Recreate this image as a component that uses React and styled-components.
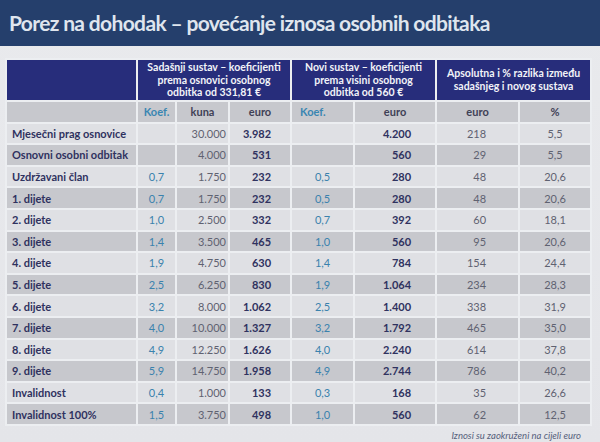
import React from "react";
import styled, { createGlobalStyle } from "styled-components";

const Global = createGlobalStyle`
  html, body { margin: 0; padding: 0; }
  body {
    width: 600px; height: 442px; overflow: hidden;
    background: #e7e8eb;
    font-family: Lato, "Open Sans", "Liberation Sans", sans-serif;
  }
`;

const Page = styled.div`
  width: 600px;
  height: 442px;
  display: flex;
  flex-direction: column;
  background: linear-gradient(180deg, #e9eaed 0%, #e4e5e9 100%);
`;

const TitleBar = styled.header`
  height: 46px;
  background: #253f6c;
  display: flex;
  align-items: center;
  padding: 0 0 2px 9px;
  box-sizing: border-box;
`;

const Title = styled.h1`
  margin: 0;
  font-family: Lato, "Open Sans", sans-serif;
  font-weight: 700;
  font-size: 21px;
  color: #dfe5ee;
  letter-spacing: -0.65px;
  white-space: nowrap;
`;

const Body = styled.main`
  padding: 12px 11px 0 5px;
  display: flex;
  flex-direction: column;
`;

const Table = styled.table`
  border-collapse: collapse;
  table-layout: fixed;
  width: 585px;
  font-size: 11px;
`;

const HeadCell = styled.th`
  background: #272d7b;
  color: #f2f3f8;
  font-weight: 700;
  font-size: 10.5px;
  line-height: 12.6px;
  height: 40px;
  padding: 0 2px;
  border: 2px solid #eceef1;
  text-align: center;
  vertical-align: middle;
`;

const Cell = styled.td`
  background: ${(p) => (p.$dark ? "#c7c8cd" : "#dfe0e4")};
  border: 2px solid #eceef1;
  height: 19.6px;
  padding: 0 ${(p) => p.$pr || 0}px 0 ${(p) => p.$pl || 0}px;
  text-align: ${(p) => p.$align || "center"};
  vertical-align: middle;
  white-space: nowrap;
  font-weight: ${(p) => (p.$bold ? 700 : 400)};
  color: ${(p) =>
    p.$kind === "koef" ? "#3a82ad" : p.$kind === "label" || p.$bold ? "#2f325f" : "#5f6271"};
`;

const SubCell = styled(Cell)`
  font-weight: 700;
  color: ${(p) => (p.$kind === "koef" ? "#3a86b2" : "#3f4156")};
`;

const Note = styled.p`
  margin: 4px 8px 0 0;
  align-self: flex-end;
  font-style: italic;
  font-size: 9.5px;
  color: #56617c;
`;

const rows = [
  ["Mjesečni prag osnovice", "", "30.000", "3.982", "", "4.200", "218", "5,5"],
  ["Osnovni osobni odbitak", "", "4.000", "531", "", "560", "29", "5,5"],
  ["Uzdržavani član", "0,7", "1.750", "232", "0,5", "280", "48", "20,6"],
  ["1. dijete", "0,7", "1.750", "232", "0,5", "280", "48", "20,6"],
  ["2. dijete", "1,0", "2.500", "332", "0,7", "392", "60", "18,1"],
  ["3. dijete", "1,4", "3.500", "465", "1,0", "560", "95", "20,6"],
  ["4. dijete", "1,9", "4.750", "630", "1,4", "784", "154", "24,4"],
  ["5. dijete", "2,5", "6.250", "830", "1,9", "1.064", "234", "28,3"],
  ["6. dijete", "3,2", "8.000", "1.062", "2,5", "1.400", "338", "31,9"],
  ["7. dijete", "4,0", "10.000", "1.327", "3,2", "1.792", "465", "35,0"],
  ["8. dijete", "4,9", "12.250", "1.626", "4,0", "2.240", "614", "37,8"],
  ["9. dijete", "5,9", "14.750", "1.958", "4,9", "2.744", "786", "40,2"],
  ["Invalidnost", "0,4", "1.000", "133", "0,3", "168", "35", "26,6"],
  ["Invalidnost 100%", "1,5", "3.750", "498", "1,0", "560", "62", "12,5"],
];

export default function App() {
  return (
    <Page>
      <Global />
      <TitleBar>
        <Title>Porez na dohodak – povećanje iznosa osobnih odbitaka</Title>
      </TitleBar>
      <Body>
        <Table>
          <colgroup>
            <col style={{ width: 131 }} />
            <col style={{ width: 39 }} />
            <col style={{ width: 53 }} />
            <col style={{ width: 62 }} />
            <col style={{ width: 63 }} />
            <col style={{ width: 82 }} />
            <col style={{ width: 83 }} />
            <col style={{ width: 72 }} />
          </colgroup>
          <thead>
            <tr>
              <HeadCell />
              <HeadCell colSpan={3}>
                Sadašnji sustav – koeficijenti
                <br />
                prema osnovici osobnog
                <br />
                odbitka od 331,81 €
              </HeadCell>
              <HeadCell colSpan={2}>
                Novi sustav – koeficijenti
                <br />
                prema visini osobnog
                <br />
                odbitka od 560 €
              </HeadCell>
              <HeadCell colSpan={2}>
                Apsolutna i % razlika između
                <br />
                sadašnjeg i novog sustava
              </HeadCell>
            </tr>
          </thead>
          <tbody>
            <tr>
              <SubCell $dark />
              <SubCell $dark $kind="koef">Koef.</SubCell>
              <SubCell $dark>kuna</SubCell>
              <SubCell $dark>euro</SubCell>
              <SubCell $dark $kind="koef" $align="left" $pl={8}>Koef.</SubCell>
              <SubCell $dark>euro</SubCell>
              <SubCell $dark>euro</SubCell>
              <SubCell $dark>%</SubCell>
            </tr>
            {rows.map((r, i) => {
              const dark = i % 2 === 1;
              return (
                <tr key={r[0]}>
                  <Cell $dark={dark} $kind="label" $bold $align="left" $pl={5}>{r[0]}</Cell>
                  <Cell $dark={dark} $kind="koef">{r[1]}</Cell>
                  <Cell $dark={dark} $align="right" $pr={2}>{r[2]}</Cell>
                  <Cell $dark={dark} $bold $align="right" $pr={19}>{r[3]}</Cell>
                  <Cell $dark={dark} $kind="koef">{r[4]}</Cell>
                  <Cell $dark={dark} $bold $align="right" $pr={24}>{r[5]}</Cell>
                  <Cell $dark={dark} $align="right" $pr={32}>{r[6]}</Cell>
                  <Cell $dark={dark}>{r[7]}</Cell>
                </tr>
              );
            })}
          </tbody>
        </Table>
        <Note>Iznosi su zaokruženi na cijeli euro</Note>
      </Body>
    </Page>
  );
}
